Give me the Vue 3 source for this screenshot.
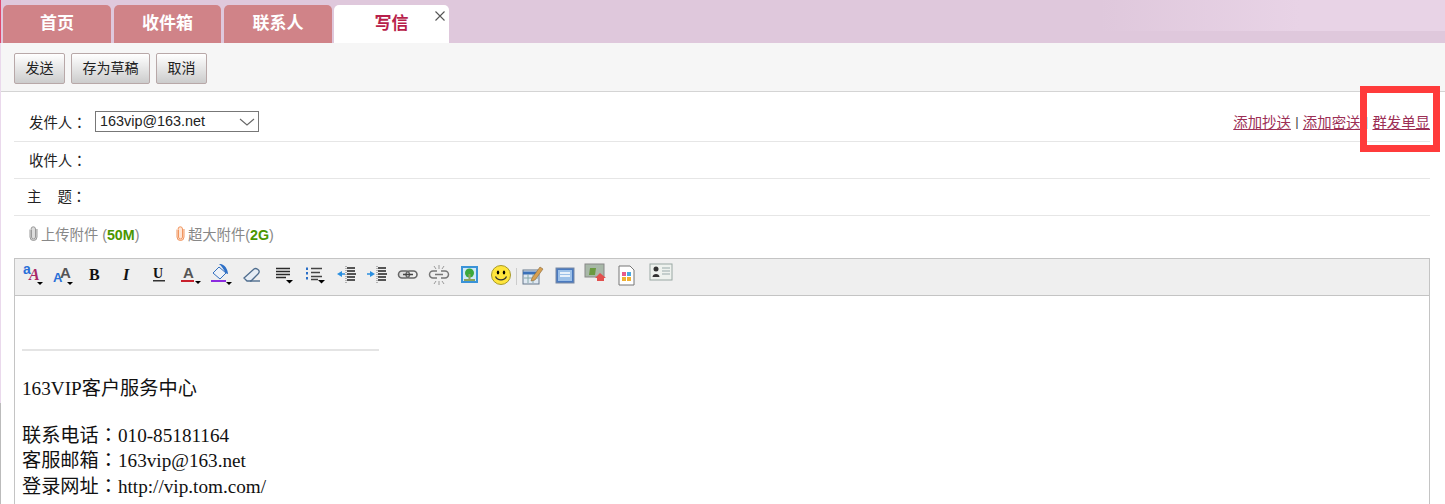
<script setup>
const tabs = ['首页', '收件箱', '联系人']
</script>

<template>
  <div class="page">
    <header class="tabbar">
      <div v-for="t in tabs" :key="t" class="tab">{{ t }}</div>
      <div class="tab active">写信
        <svg class="close" width="10" height="10" viewBox="0 0 10 10"><path d="M.5.500l9 9M9.500.500l-9 9" stroke="#555" stroke-width="1.100"/></svg>
      </div>
    </header>
    <div class="actions">
      <button class="btn">发送</button>
      <button class="btn">存为草稿</button>
      <button class="btn">取消</button>
    </div>
    <main class="form">
      <div class="row first">
        <label class="lbl">发件人<span class="colon">：</span></label>
        <div class="select">163vip@163.net
          <svg width="16" height="8" viewBox="0 0 16 8" class="chev"><path d="M1 1l7 6 7-6" fill="none" stroke="#666" stroke-width="1.100"/></svg>
        </div>
        <div class="links">
          <a>添加抄送</a><span class="bar">|</span><a>添加密送</a><span class="bar">|</span><a>群发单显</a>
        </div>
      </div>
      <div class="row second"><label class="lbl">收件人<span class="colon">：</span></label></div>
      <div class="row third"><label class="lbl subj">主<span class="gapc"></span>题<span class="colon">：</span></label></div>
      <div class="attach">
        <span class="att">
          <svg width="9" height="15" viewBox="0 0 9 15"><path d="M2.500 3.500v7.500a2 2 0 004 0V3a2.200 2.200 0 00-4.400 0M1 3.500V11a3.500 3.500 0 007 0V3" fill="#ddd" stroke="#999"/></svg>
          <span>上传附件 (<b>50M</b>)</span>
        </span>
        <span class="att">
          <svg width="9" height="15" viewBox="0 0 9 15"><path d="M2.500 3.500v7.500a2 2 0 004 0V3a2.200 2.200 0 00-4.400 0M1 3.500V11a3.500 3.500 0 007 0V3" fill="#ffe6d6" stroke="#f0955f"/></svg>
          <span>超大附件(<b>2G</b>)</span>
        </span>
      </div>
      <div class="editor">
        <div class="tools">
          <svg width="24" height="24" viewBox="0 0 24 24"><text x="2" y="11" class="ta">a</text><text x="8" y="17" class="tb">A</text><path d="M16 19h6l-3 3z"/></svg>
          <svg width="24" height="24" class="g1" viewBox="0 0 24 24"><text x="1" y="19" class="tc">A</text><text x="8" y="15" class="td">A</text><path d="M15 19h6l-3 3z"/></svg>
          <svg width="24" height="24" class="g2" viewBox="0 0 24 24"><text x="5" y="17" class="tf">B</text></svg>
          <svg width="24" height="24" viewBox="0 0 24 24"><text x="7" y="17" class="tf it">I</text></svg>
          <svg width="24" height="24" viewBox="0 0 24 24"><text x="6" y="15" class="tf sm">U</text><rect x="6" y="17" width="12" height="1.500" fill="#333"/></svg>
          <svg width="24" height="24" viewBox="0 0 24 24"><text x="5" y="15" class="te">A</text><rect x="3" y="17" width="13" height="2" fill="#c8202c"/><path d="M17 18h6l-3 3z"/></svg>
          <svg width="24" height="24" viewBox="0 0 24 24"><path d="M4 10l6-6 7 6-6 6z" fill="#eef2f8" stroke="#3370c0"/><path d="M10 1c5-1 9 5 9 10-3 0-4-6-9-10z" fill="#2d70c8"/><rect x="2" y="17" width="15" height="2" fill="#8c2be0"/><path d="M17 19h6l-3 3z"/></svg>
          <svg width="24" height="24" class="g3" viewBox="0 0 24 24"><path d="M3 15L13 6c2-1.500 6 1 5 3.500-.3 1-1 1.500-2 2.500l-6 6H6z" fill="#e6edf5" stroke="#4f6d8e" stroke-width="1.300"/><path d="M9 18h10" stroke="#4f6d8e" stroke-width="1.400"/></svg>
          <svg width="24" height="24" viewBox="0 0 24 24"><path d="M4 5.500h14M4 8.500h14M4 11.500h14M4 14.500h10" stroke="#2a2a2a" stroke-width="1.600"/><path d="M14 17h7l-3.500 3.500z"/></svg>
          <svg width="24" height="24" viewBox="0 0 24 24"><path d="M8 5.500h11M8 9.500h9M8 13.500h11M8 16.500h7" stroke="#444" stroke-width="1.300"/><path d="M4 4.500v2.500M4 9v2.500M4 14v2.500" stroke="#2a6fc8" stroke-width="2"/><path d="M15 17h7l-3.500 3.500z"/></svg>
          <svg width="24" height="24" viewBox="0 0 24 24"><path d="M13 5h8M13 8h8M13 11h9M13 14h8M13 17h8" stroke="#222" stroke-width="1.700"/><path d="M3 11l5-3v6z" fill="#2a8fe0"/><path d="M8 11h3" stroke="#2a8fe0" stroke-width="1.500"/><path d="M12 3v18" stroke="#777" stroke-dasharray="1 1"/></svg>
          <svg width="24" height="24" viewBox="0 0 24 24"><path d="M13 5h8M13 8h8M13 11h9M13 14h8M13 17h8" stroke="#222" stroke-width="1.700"/><path d="M10 11L5 8v6z" fill="#2a8fe0"/><path d="M2 11h3" stroke="#2a8fe0" stroke-width="1.500"/><path d="M12 3v18" stroke="#777" stroke-dasharray="1 1"/></svg>
          <svg width="24" height="24" viewBox="0 0 24 24"><rect x="2.500" y="8" width="11" height="7" rx="3.500" fill="#ddd" stroke="#666" stroke-width="1.600"/><rect x="10" y="8" width="11" height="7" rx="3.500" fill="none" stroke="#666" stroke-width="1.600"/><path d="M7 11.500h10" stroke="#444" stroke-width="1.500"/></svg>
          <svg width="24" height="24" viewBox="0 0 24 24"><path d="M10 8H6a3.500 3.500 0 000 7h4M14 8h4a3.500 3.500 0 010 7h-4M8 11.500h8" fill="none" stroke="#777" stroke-width="1.500"/><path d="M12 2v4M12 18v4M7 3l2 3M17 3l-2 3M7 21l2-3M17 21l-2-3" stroke="#999"/></svg>
          <svg width="24" height="24" viewBox="0 0 24 24"><rect x="3" y="3" width="17" height="17" fill="#3a93d8"/><rect x="5" y="5" width="13" height="13" fill="#cfe9f8"/><circle cx="11.500" cy="10" r="4.500" fill="#3aa83c"/><path d="M10.500 11h2v5h-2zM6 16h11v2H6z" fill="#8ca45c"/></svg>
          <svg width="24" height="24" viewBox="0 0 24 24"><circle cx="12" cy="12" r="9.500" fill="#ffe53c" stroke="#a89a28"/><ellipse cx="9" cy="9.500" rx="1.200" ry="2"/><ellipse cx="15" cy="9.500" rx="1.200" ry="2"/><path d="M6.500 13.500c2 4.500 9 4.500 11 0" fill="none" stroke="#333" stroke-width="1.200"/></svg>
          <span class="sep"></span>
          <svg width="24" height="24" viewBox="0 0 24 24"><rect x="3" y="7" width="16" height="14" fill="#dfe8f2" stroke="#66788c"/><path d="M3 10h16" stroke="#3a70b8" stroke-width="3"/><path d="M8 11v9M13 11v9M4 15h14" stroke="#8aa"/><path d="M12 15l8-11 3 2-8 11-4 1z" fill="#d8a050" stroke="#8a6a3a" stroke-width=".6"/></svg>
          <svg width="24" height="24" class="g4" viewBox="0 0 24 24"><rect x="3" y="5" width="18" height="15" fill="#4a7ac0" stroke="#7a8aa4"/><rect x="5" y="7" width="14" height="11" fill="#9cc0e8"/><path d="M7 10h10M7 13h10" stroke="#fff" stroke-width="1.500"/></svg>
          <svg width="24" height="24" viewBox="0 0 24 24"><rect x="1" y="1" width="19" height="13" fill="#a8b8a8" stroke="#888"/><path d="M6 5l6 0-1 7H5z" fill="#6a9a40"/><path d="M11 15l5-5 6 5h-2v3h-7v-3z" fill="#e2504e"/></svg>
          <svg width="24" height="24" viewBox="0 0 24 24"><path d="M4 3h11l4 4v15H4z" fill="#fff" stroke="#777"/><rect x="7" y="9" width="4" height="4" fill="#e85a8a"/><rect x="12" y="9" width="4" height="4" fill="#4aa8e0"/><rect x="7" y="14" width="4" height="4" fill="#f0b030"/><rect x="12" y="14" width="4" height="4" fill="#f0b030"/></svg>
          <svg width="24" height="24" class="g5" viewBox="0 0 24 24"><rect x="1" y="1" width="22" height="16" fill="#eef2ee" stroke="#9aa8a4"/><circle cx="7" cy="6" r="2.500" fill="#333"/><path d="M3.500 14c0-4 7-4 7 0z" fill="#333"/><path d="M13 5h8M13 8h8M13 11h8" stroke="#9aa"/></svg>
        </div>
        <div class="body">
          <hr class="rule" />
          <p class="svc">163VIP客户服务中心</p>
          <p class="ln">联系电话<span class="colon">：</span>010-85181164</p>
          <p class="ln">客服邮箱<span class="colon">：</span>163vip@163.net</p>
          <p class="ln">登录网址<span class="colon">：</span>http://vip.tom.com/</p>
        </div>
      </div>
    </main>
    <div class="mark"></div>
    <div class="edge"></div>
  </div>
</template>

<style scoped>
.page { position: relative; width: 1445px; height: 504px; overflow: hidden; background: #fff; font-family: "Liberation Sans", "Noto Sans CJK SC", sans-serif; }
.tabbar { display: flex; gap: 3px; height: 43px; padding: 5px 0 0 3px; box-sizing: border-box; background: linear-gradient(90deg, rgba(232,211,230,0) 1100px, #e8d3e6 1300px) top / 100% 31px no-repeat, #dfc8dc; }
.tab { width: 108px; height: 38px; border-radius: 5px 5px 0 0; background: #d08388; color: #fff; font-size: 17px; font-weight: 700; line-height: 38px; text-align: center; }
.tab:nth-child(2) { width: 107px; }
.tab.active { position: relative; width: 115px; margin-left: -1px; background: #fff; color: #b81f4b; }
.close { position: absolute; right: 4px; top: 6px; }
.actions { display: flex; gap: 6px; height: 49px; padding: 10px 0 0 14px; box-sizing: border-box; background: #f6f6f6; border-bottom: 1px solid #d4d4d4; }
.btn { height: 31px; padding: 0 10.500px 3px; border: 1px solid #b8a8a8; border-radius: 2px; background: linear-gradient(#fff, #ccc); font: 14px "Liberation Sans", "Noto Sans CJK SC", sans-serif; color: #222; }
.form { padding: 0 15px 0 14px; }
.row { display: flex; align-items: center; height: 36px; border-bottom: 1px solid #e6e6e6; font-size: 14.400px; color: #222; }
.row.first { height: 50px; padding-top: 10px; box-sizing: border-box; }
.row.second { height: 36px; box-sizing: content-box; }
.second .lbl { margin-top: -2px; }
.third .lbl { margin-top: -4px; }
.lbl { width: 81px; padding-left: 15px; box-sizing: border-box; flex: none; }
.subj { padding-left: 13px; }
.gapc { display: inline-block; width: 16px; }
.colon { font-family: "Noto Sans CJK TC", sans-serif; line-height: 0; }
.select { position: relative; width: 164px; height: 21px; box-sizing: border-box; border: 1px solid #777; font-size: 14.400px; line-height: 19px; padding-left: 4px; color: #222; }
.chev { position: absolute; right: 3px; top: 6px; }
.links { margin-left: auto; display: flex; align-items: center; font-size: 14.400px; color: #9c2f55; }
.links a { text-decoration: underline; }
.bar { width: 12px; text-align: center; color: #444; font-size: 13px; }
.attach { display: flex; height: 42px; align-items: center; padding: 0 0 7px 15px; box-sizing: border-box; font-size: 14.300px; color: #888; }
.att { display: flex; align-items: center; gap: 3px; width: 147px; }
.att b { color: #4a9600; }
.editor { border: 1px solid #c4c4c4; border-bottom: 0; height: 246px; }
.tools { display: flex; align-items: flex-start; gap: 7px; height: 37px; padding: 4px 0 0 6px; box-sizing: border-box; background: #efefef; border-bottom: 1px solid #c4c4c4; }
.tools svg { flex: none; overflow: visible; }
.g1, .g2 { margin-right: 1px; }
.g3 { margin-left: 1px; }
.g4 { margin-left: 2px; }
.g5 { margin-left: 3px; }
.sep { width: 1px; height: 17px; margin: 5px -4px 0; background: #ccc; }
.ta { font: 700 14px "Liberation Sans", sans-serif; fill: #2a6fd8; }
.tb { font: italic 700 16px "Liberation Serif", serif; fill: #a82868; }
.tc { font: 700 13px "Liberation Sans", sans-serif; fill: #2a6fd8; }
.td { font: 700 15px "Liberation Sans", sans-serif; fill: #555; }
.te { font: 700 15px "Liberation Sans", sans-serif; fill: #555; }
.tf { font: 700 16px "Liberation Serif", serif; fill: #111; }
.it { font-style: italic; }
.sm { font-size: 14px; }
.body { padding: 53px 0 0 7px; font: 19.200px/25.500px "Liberation Serif", "Noto Sans CJK SC", serif; color: #111; }
.rule { width: 357px; height: 2px; margin: 0; border: 0; background: #e4e4e4; }
.svc { margin: 25px 0 21px; }
.ln { margin: 0; }
.mark { position: absolute; left: 1360px; top: 86px; width: 80px; height: 66px; box-sizing: border-box; border: 7px solid #ff3b3b; }
.edge { position: absolute; left: 0; top: 0; width: 1px; height: 504px; background: linear-gradient(#e0486e 43px, #ead9ec 43px, #ead9ec 403px, #bbb 403px); }
</style>
